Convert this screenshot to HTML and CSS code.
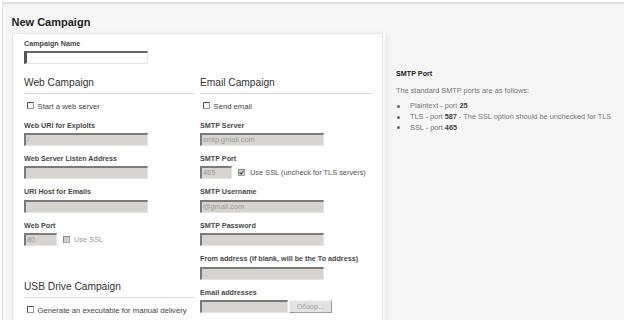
FILE: index.html
```html
<!DOCTYPE html>
<html>
<head>
<meta charset="utf-8">
<link rel="stylesheet" href="styles.css">
</head>
<body>
<div class="page">
  <h1 class="title">New Campaign</h1>
  <div class="layout">
    <div class="panel">
      <div class="lbl">Campaign Name</div>
      <div class="inp name"></div>
      <div class="cols">
        <div class="col">
          <h2 class="sec">Web Campaign</h2>
          <div class="chk"><span class="box"></span>Start a web server</div>
          <div class="field"><div class="lbl">Web URI for Exploits</div><div class="inp dis">/</div></div>
          <div class="field"><div class="lbl">Web Server Listen Address</div><div class="inp dis"></div></div>
          <div class="field"><div class="lbl">URI Host for Emails</div><div class="inp dis"></div></div>
          <div class="field"><div class="lbl">Web Port</div>
            <div class="row"><div class="inp dis port">80</div><div class="chk off"><span class="box gray"></span>Use SSL</div></div>
          </div>
          <h2 class="sec usb">USB Drive Campaign</h2>
          <div class="chk"><span class="box"></span>Generate an executable for manual delivery</div>
        </div>
        <div class="col">
          <h2 class="sec">Email Campaign</h2>
          <div class="chk"><span class="box"></span>Send email</div>
          <div class="field"><div class="lbl">SMTP Server</div><div class="inp dis">smtp.gmail.com</div></div>
          <div class="field"><div class="lbl">SMTP Port</div>
            <div class="row"><div class="inp dis port2">465</div><div class="chk ssl"><span class="box gray checked"><svg width="5" height="5" viewBox="0 0 5 5"><path d="M0.5 2.5 L2 4 L4.5 0.8" fill="none" stroke="#555" stroke-width="1.2"/></svg></span>Use SSL (uncheck for TLS servers)</div></div>
          </div>
          <div class="field"><div class="lbl">SMTP Username</div><div class="inp dis">@gmail.com</div></div>
          <div class="field"><div class="lbl">SMTP Password</div><div class="inp dis"></div></div>
          <div class="field"><div class="lbl">From address (if blank, will be the To address)</div><div class="inp dis"></div></div>
          <div class="field"><div class="lbl">Email addresses</div>
            <div class="row"><div class="inp dis file"></div><div class="btn">Обзор...</div></div>
          </div>
        </div>
      </div>
    </div>
    <aside class="help">
      <div class="help-title">SMTP Port</div>
      <p class="help-text">The standard SMTP ports are as follows:</p>
      <ul class="help-list">
        <li><span>Plaintext - port <b>25</b></span></li>
        <li><span>TLS - port <b>587</b> - The SSL option should be unchecked for TLS</span></li>
        <li><span>SSL - port <b>465</b></span></li>
      </ul>
    </aside>
  </div>
</div>
</body>
</html>
```
FILE: styles.css
```css
* { box-sizing: border-box; margin: 0; padding: 0; }
body { font-family: "Liberation Sans", Arial, sans-serif; background: #fff; color: #333; overflow: hidden; }
.page { margin: 2px 3px 0 2px; border-top: 2px solid #e0e0e0; border-left: 1px solid #e0e0e0; background: #f6f6f6; padding-top: 12px; height: 340px; }
.title { font-size: 11px; font-weight: bold; line-height: 13px; color: #222; margin: 0 0 4px 8.5px; }
.layout { display: flex; align-items: flex-start; }
.panel { margin-left: 9px; width: 371px; height: 300px; background: #fff; border: 1px solid #e6e6e6; border-bottom: none; padding: 3.6px 10px 0 11px; box-shadow: 2px 0 0 #fafafa, 6px 0 4px rgba(0,0,0,0.035); }
.lbl { font-size: 7.2px; font-weight: bold; line-height: 11px; color: #484848; margin-bottom: 2.4px; white-space: nowrap; }
.inp { height: 13px; width: 124px; border-top: 2px solid #7a7a7a; border-left: 2px solid #7a7a7a; border-right: 1px solid #e4e4e4; border-bottom: 1px solid #e4e4e4; font-size: 7.4px; line-height: 10px; color: #9a9a9a; padding-left: 1px; white-space: nowrap; overflow: hidden; }
.inp.name { background: #fff; border-left: 3px solid #555; border-top-color: #666; }
.inp.dis { background: #d7d4cf; }
.inp.port { width: 33px; }
.inp.port2 { width: 32px; }
.inp.file { width: 88px; }
.cols { display: grid; grid-template-columns: 170px 172px; column-gap: 6px; margin-top: 12.4px; }
.sec { font-size: 10.2px; font-weight: normal; line-height: 13px; padding-bottom: 4px; border-bottom: 1px solid #d6d6d6; color: #333; margin-bottom: 6.6px; }
.sec.usb { margin-top: 34.2px; }
.chk { display: flex; align-items: center; font-size: 7.7px; line-height: 11px; height: 11px; color: #444; margin-bottom: 7.6px; white-space: nowrap; }
.box { display: flex; align-items: center; justify-content: center; width: 7px; height: 7px; margin: 0 4px 1px 2.5px; background: #fff; border: 1px solid #999; border-top-color: #555; border-left-color: #555; flex: none; }
.box.gray { background: #cfcfcf; border-color: #aaa; border-top-color: #888; border-left-color: #888; }
.field { margin-bottom: 7px; }
.row { display: flex; align-items: center; }
.chk.off { margin: 0 0 0 3.5px; color: #999; font-size: 7.4px; }
.chk.ssl { margin: 0 0 0 3.5px; font-size: 7.4px; color: #555; }
.chk.ssl .box { margin-right: 5px; }
.btn { width: 43px; height: 13px; margin-left: 1px; background: #e2e2e2; border: 1px solid #f4f4f4; border-right-color: #9a9a9a; border-bottom-color: #9a9a9a; font-size: 7.4px; line-height: 11px; color: #a0a0a0; text-align: center; }
.help { padding: 34.6px 0 0 13px; color: #777; }
.help-title { font-size: 7.2px; font-weight: bold; line-height: 11px; color: #222; }
.help-text { font-size: 7.35px; line-height: 11px; margin-top: 6px; }
.help-list { list-style: none; margin-top: 5.6px; }
.help-list li { display: flex; align-items: center; font-size: 7.35px; line-height: 10.7px; white-space: nowrap; }
.help-list li::before { content: ""; width: 3px; height: 3px; border-radius: 50%; background: #666; margin: 0 10px 0 1px; flex: none; }
.help-list b { color: #444; }
```
